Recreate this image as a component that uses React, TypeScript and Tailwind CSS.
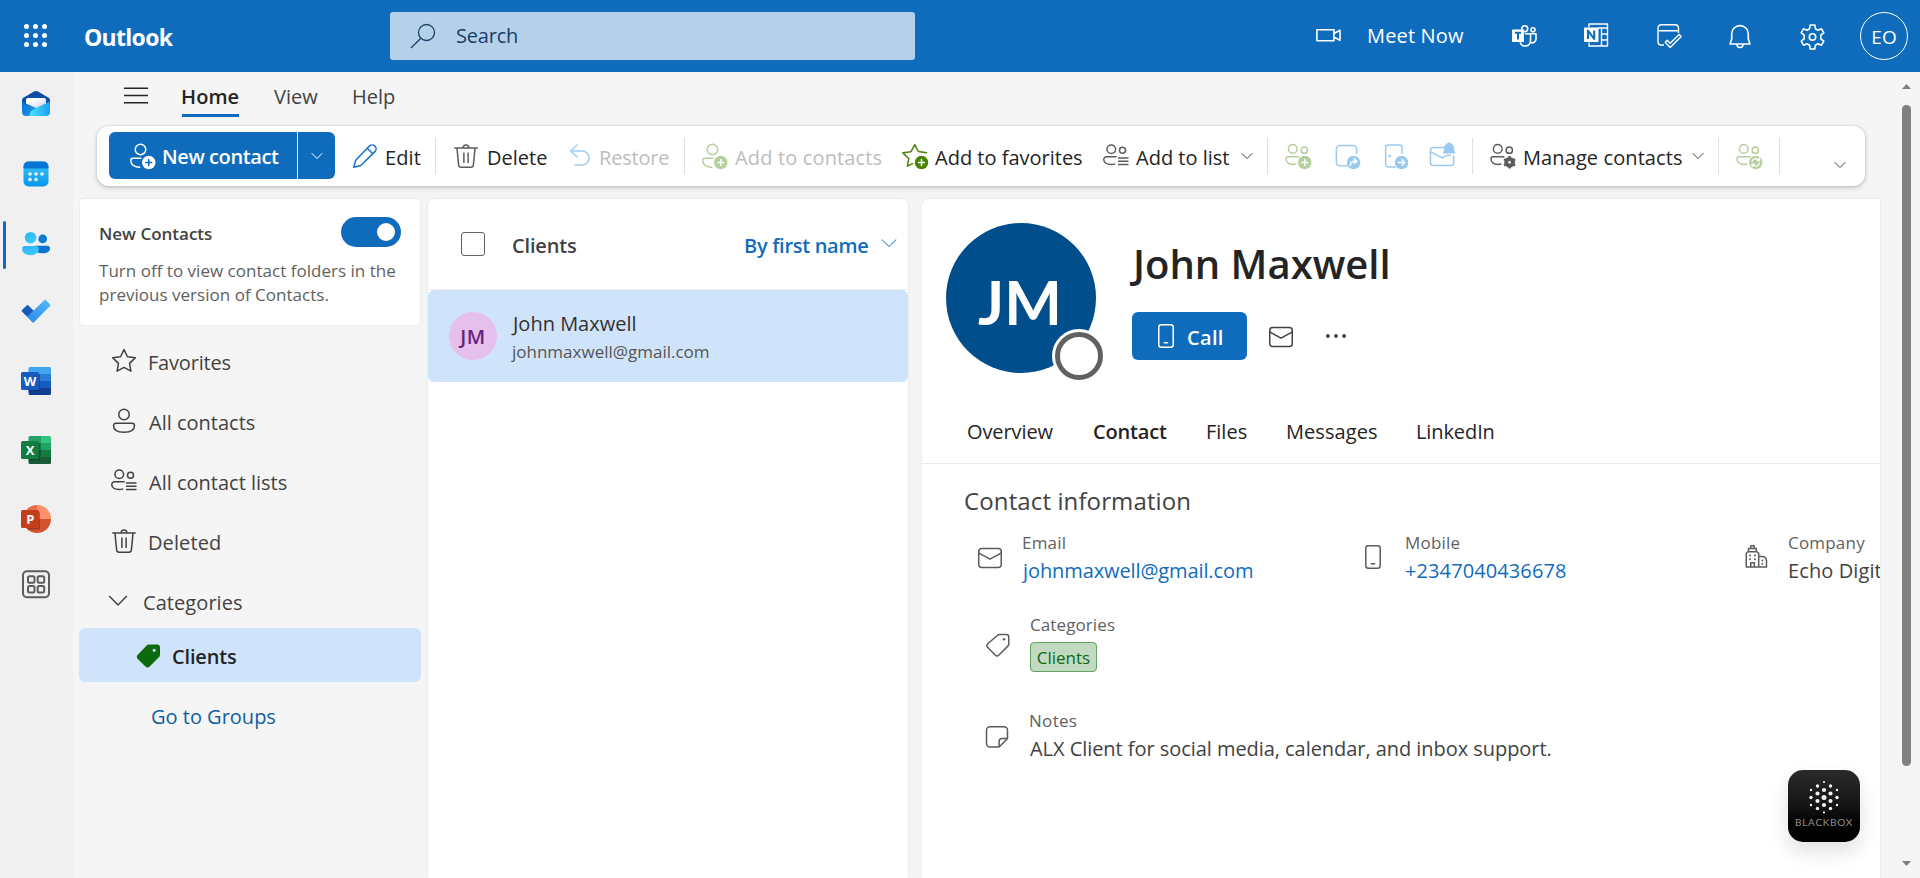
import type { ReactNode } from "react";

type IconProps = { className?: string; children: ReactNode };

/* 20-unit grid, drawn at 30px */
function Icon({ className = "", children }: IconProps) {
  return (
    <svg
      viewBox="0 0 20 20"
      fill="none"
      stroke="currentColor"
      strokeWidth="1"
      strokeLinecap="round"
      strokeLinejoin="round"
      className={`h-[30px] w-[30px] shrink-0 ${className}`}
    >
      {children}
    </svg>
  );
}

/* 28px grid, used in the top bar */
function BarIcon({ className = "", children }: IconProps) {
  return (
    <svg
      viewBox="0 0 28 28"
      fill="none"
      stroke="currentColor"
      strokeWidth="1.6"
      strokeLinejoin="round"
      className={`h-7 w-7 shrink-0 ${className}`}
    >
      {children}
    </svg>
  );
}

function Chevron({ className = "" }: { className?: string }) {
  return (
    <svg viewBox="0 0 12 12" fill="none" stroke="currentColor" strokeWidth="1" className={`h-3 w-3 shrink-0 ${className}`}>
      <path d="M.7 3.2 6 8.6l5.3-5.4" />
    </svg>
  );
}

const Plus = ({ cx = 14.5, cy = 14.3, mark = "#fff" }: { cx?: number; cy?: number; mark?: string }) => (
  <>
    <circle cx={cx} cy={cy} r="4.5" fill="currentColor" stroke="none" />
    <path d={`M${cx - 2} ${cy}h4M${cx} ${cy - 2}v4`} stroke={mark} />
  </>
);

function PersonAdd({ className, mark }: { className?: string; mark?: string }) {
  return (
    <Icon className={className}>
      <circle cx="9" cy="5.6" r="3.5" />
      <path d="M9.3 11.5H4A1.5 1.5 0 0 0 2.5 13c0 2.7 2.6 4.3 6 4.5" />
      <Plus mark={mark} />
    </Icon>
  );
}

function TwoPeople({ className, children }: { className?: string; children: ReactNode }) {
  return (
    <Icon className={className}>
      <circle cx="6.5" cy="5.3" r="2.9" />
      <circle cx="14.2" cy="6.1" r="2.1" />
      <path d="M10.6 10.5H3.4A1.4 1.4 0 0 0 2 11.9c0 2.3 1.9 3.7 4.5 3.7.8 0 1.5-.1 2.1-.3" />
      {children}
    </Icon>
  );
}

function PeopleList({ className }: { className?: string }) {
  return (
    <Icon className={className}>
      <circle cx="7.5" cy="5.5" r="2.9" />
      <circle cx="15" cy="6.2" r="2" />
      <path d="M10.8 10.5H4.4A1.9 1.9 0 0 0 2.5 12.4c0 2 2 3.3 4.9 3.3.9 0 1.7-.1 2.4-.3" />
      <path d="M12 11.3h7M12 13.5h7M12 15.7h7" strokeLinecap="butt" />
    </Icon>
  );
}

const Trash = ({ className }: { className?: string }) => (
  <Icon className={className}>
    <path d="M2.500 4.700h15M8.100 4.500a1.900 1.900 0 0 1 3.800 0M4 4.900l1.100 11.200a1.600 1.600 0 0 0 1.600 1.400h6.600a1.600 1.600 0 0 0 1.600-1.400L16 4.900M8.600 8v6.300M11.400 8v6.300" />
  </Icon>
);

const Envelope = ({ className }: { className?: string }) => (
  <Icon className={className}>
    <rect x="2.5" y="3.7" width="15" height="12.6" rx="2" />
    <path d="m2.7 6.7 7.3 4.1 7.3-4.1" />
  </Icon>
);

const Phone = ({ className }: { className?: string }) => (
  <Icon className={className}>
    <rect x="5.2" y="2.5" width="9.6" height="15" rx="1.7" />
    <path d="M8.9 14.5h2.2" />
  </Icon>
);

const Star = ({ className }: { className?: string }) => (
  <Icon className={className}>
    <path d="m10 2.4 2.3 4.8 5.2.7-3.8 3.7.9 5.2-4.6-2.5-4.6 2.5.9-5.2L2.5 7.9l5.2-.7z" />
  </Icon>
);

const Divider = ({ className = "" }: { className?: string }) => (
  <span className={`h-9 w-px shrink-0 bg-[#e0e0e0] ${className}`} />
);

const Label = ({ className = "", children }: { className?: string; children: ReactNode }) => (
  <span className={`mt-[3px] shrink-0 text-[20px] leading-7 ${className}`}>{children}</span>
);

function TopBar() {
  return (
    <header className="flex h-[72px] shrink-0 items-center bg-[#0f6cbd] text-white">
      <svg viewBox="0 0 24 24" fill="#fff" className="ml-6 h-6 w-6 shrink-0">
        {[2.5, 11.5, 20.5].map((y) =>
          [2.5, 11.5, 20.5].map((x) => <circle key={`${x}-${y}`} cx={x} cy={y} r="2.5" />)
        )}
      </svg>
      <span className="ml-[36px] mt-0.5 w-[100px] text-[23px] font-bold leading-8 tracking-[-0.7px]">Outlook</span>
      <div className="ml-[206px] flex h-12 w-[525px] items-center rounded-[3px] bg-[#b5d1ea] text-[#174066]">
        <svg viewBox="0 0 26 26" fill="none" stroke="currentColor" strokeWidth="1.3" className="ml-5 h-[26px] w-[26px]">
          <circle cx="16.5" cy="9.5" r="8" />
          <path d="M10.800 15.200 1 25" />
        </svg>
        <span className="ml-5 text-[20px] leading-7 tracking-[-0.2px]">Search</span>
      </div>
      <BarIcon className="ml-[400px]">
        <path d="M1.9 7.8h17v11h-17zM19 11.5l6-3.2v10l-6-3.2" />
      </BarIcon>
      <span className="ml-6 w-[99px] text-[20px] leading-7 tracking-[0.16px]">Meet Now</span>
      <BarIcon className="ml-[45px]">
        <circle cx="13.8" cy="6.7" r="2.9" />
        <circle cx="22" cy="7.7" r="2" />
        <path d="M14 11.8h5.500v6.800a5.300 5.300 0 0 1-10.400 1.600M19.500 11.800H25v5.500a3.700 3.700 0 0 1-5.200 3.200" />
        <rect x="1" y="7.5" width="12" height="12.5" rx=".6" fill="#fff" stroke="none" />
        <path d="M4 10.8h6M7 10.8v6.7" stroke="#0f6cbd" strokeWidth="2" />
      </BarIcon>
      <BarIcon className="ml-[43px]">
        <path d="M7 5V2h18.5v22H7v-3.500M16 6h9.500M19.500 6v18M19.500 12H25M19.500 18H25" strokeWidth="1.4" />
        <rect x="2" y="5.5" width="14.5" height="14.5" rx=".8" fill="#fff" stroke="none" />
        <path d="M6 17V8.500L12.200 17V8.500" stroke="#0f6cbd" strokeWidth="2.1" />
      </BarIcon>
      <BarIcon className="ml-[46px]">
        <path d="M22.500 11V6a3.200 3.200 0 0 0-3.200-3.200H5.200A3.200 3.200 0 0 0 2 6v13.800A3.200 3.200 0 0 0 5.200 23H8M2 8.700h20.500" strokeWidth="1.4" />
        <path d="m9.200 20.300 2-2 2.900 2.900 9-8.700 2.100 2-11 11.100z" strokeWidth="1.4" />
      </BarIcon>
      <BarIcon className="ml-[42px]">
        <path d="M14 3.600a8.300 8.300 0 0 0-8.300 8.300v5.300L4 22h20l-1.700-4.800v-5.300A8.300 8.300 0 0 0 14 3.600zM11 22.500a3 3 0 0 0 6 0" />
      </BarIcon>
      <BarIcon className="ml-[44px]">
        <path d="M11.600 6.700 12.200 3h4.600l.6 3.700 2.500 1.500 3.600-1.400 2.300 4-3 2.400v3.600l3 2.400-2.300 4-3.600-1.400-2.500 1.500-.6 3.700h-4.600l-.6-3.700-2.500-1.500-3.600 1.400-2.300-4 3-2.400v-3.600l-3-2.400 2.300-4 3.600 1.400z" />
        <circle cx="14.5" cy="15" r="3.2" />
      </BarIcon>
      <span className="ml-[34px] flex h-12 w-12 items-center justify-center rounded-full border border-white pt-0.5 text-[19px] leading-6">
        EO
      </span>
    </header>
  );
}

const RailIcon = ({ children }: { children: ReactNode }) => (
  <svg viewBox="0 0 32 32" className="h-8 w-8">
    {children}
  </svg>
);

const tileText = "fill-white font-['Open_Sans',sans-serif] text-[13px] font-bold";

function Rail() {
  const item = "relative flex h-12 w-full items-center justify-center pr-px";
  return (
    <aside className="flex w-[73px] shrink-0 flex-col gap-[21px] bg-[#f0f0f0] pt-[9px]">
      <div className={item}>
        <RailIcon>
          <defs>
            <linearGradient id="mailLeft" x1="0" x2="1" y1="0" y2="1">
              <stop offset="0" stopColor="#0a6fd0" />
              <stop offset="1" stopColor="#1fa0f2" />
            </linearGradient>
            <linearGradient id="mailRight" x1="0" x2="1">
              <stop offset="0" stopColor="#4be3fb" />
              <stop offset="1" stopColor="#199ff0" />
            </linearGradient>
            <linearGradient id="paper" x1="0" x2="1" y1="0" y2="1">
              <stop offset=".3" stopColor="#fff" />
              <stop offset="1" stopColor="#c9ccf0" />
            </linearGradient>
          </defs>
          <path d="M2 11.500c0-1.400.6-2.400 1.800-3.100L14 2.600a4 4 0 0 1 4 0l10.200 5.800c1.200.7 1.800 1.700 1.800 3.100V20H2z" fill="#0c4fa8" />
          <path d="M6 11a2 2 0 0 1 2-2h16a2 2 0 0 1 2 2v8H6z" fill="url(#paper)" />
          <path d="M2 12.500 20 21v6H6a4 4 0 0 1-4-4z" fill="url(#mailLeft)" />
          <path d="M30 12.500 14 20c-3 1.500-4.700 4-4.700 7H26a4 4 0 0 0 4-4z" fill="url(#mailRight)" />
        </RailIcon>
      </div>
      <div className={item}>
        <RailIcon>
          <defs>
            <linearGradient id="cal" x1="0" x2="0" y1="0" y2="1">
              <stop offset="0" stopColor="#42c8fb" />
              <stop offset="1" stopColor="#0795ee" />
            </linearGradient>
          </defs>
          <rect x="3.5" y="3.5" width="25" height="25" rx="5" fill="url(#cal)" />
          <path d="M3.500 10.500v-2a5 5 0 0 1 5-5h15a5 5 0 0 1 5 5v2z" fill="#0574d4" />
          <g fill="#fff">
            <circle cx="10" cy="16" r="1.7" />
            <circle cx="16" cy="16" r="1.7" />
            <circle cx="22" cy="16" r="1.7" />
            <circle cx="10" cy="21.5" r="1.7" />
            <circle cx="16" cy="21.5" r="1.7" />
          </g>
        </RailIcon>
      </div>
      <div className={item}>
        <span className="absolute left-[3px] top-0.5 h-12 w-[3px] rounded-full bg-[#0f6cbd]" />
        <RailIcon>
          <defs>
            <linearGradient id="person" x1="0" x2="1" y1="0" y2="1">
              <stop offset="0" stopColor="#2bb2f7" />
              <stop offset="1" stopColor="#3fd0ff" />
            </linearGradient>
          </defs>
          <circle cx="22.7" cy="11.9" r="4.3" fill="#0c7bd8" />
          <path d="M15 18.700h12.500a2.500 2.500 0 0 1 2.500 2.500c0 3.200-3 5-7 5s-8-1-8-3z" fill="#0873d2" />
          <circle cx="10.6" cy="10.7" r="5.8" fill="url(#person)" />
          <path d="M5 19h11a2.800 2.800 0 0 1 2.800 2.800c0 4.200-3.500 6.400-8.300 6.400S2.200 26 2.200 21.800A2.800 2.800 0 0 1 5 19z" fill="url(#person)" />
        </RailIcon>
      </div>
      <div className={item}>
        <RailIcon>
          <defs>
            <linearGradient id="check" x1="0" x2="1" y1="1" y2="0">
              <stop offset="0" stopColor="#2b88e8" />
              <stop offset="1" stopColor="#54bcf8" />
            </linearGradient>
          </defs>
          <path d="M1.900 14.200 6.600 9.500a1.300 1.300 0 0 1 1.800 0l7.300 7.300-6 6.400-7.800-7.800a.9.9 0 0 1 0-1.200z" fill="#195abd" />
          <path d="m7.300 20.600 17-16.300a1.200 1.200 0 0 1 1.700 0l4 4a1.200 1.200 0 0 1 0 1.700L14 26.200a1.300 1.300 0 0 1-1.800 0z" fill="url(#check)" />
        </RailIcon>
      </div>
      <div className={item}>
        <RailIcon>
          <path d="M10 2h19.500A1.500 1.500 0 0 1 31 3.500V9H8.500V3.500A1.500 1.500 0 0 1 10 2z" fill="#41a5ee" />
          <path d="M8.500 9H31v7H8.500z" fill="#2b7cd3" />
          <path d="M8.500 16H31v7H8.500z" fill="#185abd" />
          <path d="M8.500 23H31v5.500a1.500 1.500 0 0 1-1.500 1.500H10a1.500 1.500 0 0 1-1.500-1.500z" fill="#103f91" />
          <path d="M8.500 8.500h10a1.500 1.500 0 0 1 1.500 1.500v15a1.500 1.500 0 0 1-1.500 1.500h-10z" fill="#0b2d66" opacity=".45" />
          <rect x="1" y="7" width="18" height="18" rx="1.5" fill="#185abd" />
          <text x="10" y="20.7" textAnchor="middle" className={tileText}>W</text>
        </RailIcon>
      </div>
      <div className={item}>
        <RailIcon>
          <path d="M10 2h11v7H8.500V3.500A1.500 1.500 0 0 1 10 2z" fill="#21a366" />
          <path d="M21 2h8.500A1.500 1.500 0 0 1 31 3.500V9H21z" fill="#33c481" />
          <path d="M8.500 9H21v7H8.500z" fill="#107c41" />
          <path d="M21 9h10v7H21z" fill="#21a366" />
          <path d="M8.500 16H31v12.500a1.500 1.500 0 0 1-1.500 1.500H10a1.500 1.500 0 0 1-1.500-1.500z" fill="#185c37" />
          <path d="M21 16h10v7H21z" fill="#107c41" />
          <path d="M8.500 8.500h10a1.500 1.500 0 0 1 1.500 1.500v15a1.500 1.500 0 0 1-1.500 1.500h-10z" fill="#0b3a20" opacity=".5" />
          <rect x="1" y="7" width="18" height="18" rx="1.5" fill="#107c41" />
          <text x="10" y="20.7" textAnchor="middle" className={tileText}>X</text>
        </RailIcon>
      </div>
      <div className={item}>
        <RailIcon>
          <path d="M17 2a14 14 0 0 0-14 14h14z" fill="#ed6c47" />
          <path d="M17 2a14 14 0 0 1 14 14H17z" fill="#ff8f6b" />
          <path d="M3 16a14 14 0 0 0 28 0z" fill="#d35230" />
          <path d="M6 8.500h12.500A1.500 1.500 0 0 1 20 10v15a1.500 1.500 0 0 1-1.500 1.500H8A14 14 0 0 1 6 8.500z" fill="#6b1f0e" opacity=".5" />
          <rect x="1" y="7" width="18" height="18" rx="1.5" fill="#c43e1c" />
          <text x="10.3" y="20.7" textAnchor="middle" className={tileText}>P</text>
        </RailIcon>
      </div>
      <div className={`-mt-[3px] ${item}`}>
        <RailIcon>
          <g fill="none" stroke="#5c5c5c" strokeWidth="2">
            <rect x="3" y="2.3" width="26" height="26" rx="4" />
            <rect x="8" y="7.3" width="6.5" height="6.5" rx="1.5" />
            <rect x="17.7" y="7.3" width="6.5" height="6.5" rx="1.5" />
            <rect x="8" y="17" width="6.5" height="6.5" rx="1.5" />
            <rect x="17.7" y="17" width="6.5" height="6.5" rx="1.5" />
          </g>
        </RailIcon>
      </div>
    </aside>
  );
}

function MenuRow() {
  return (
    <nav className="flex h-[54px] shrink-0 pl-[51px] text-[20px] leading-7 text-[#424242]">
      <svg viewBox="0 0 24 18" stroke="#242424" strokeWidth="1.5" className="mt-[15px] h-[18px] w-6">
        <path d="M0 1.200h24M0 8.500h24M0 15.700h24" />
      </svg>
      <div className="ml-[34px] mt-[11px] h-[34px] w-[57px] border-b-[3px] border-[#0f6cbd] font-semibold text-[#242424]">
        <span className="-ml-px tracking-[0.1px]">Home</span>
      </div>
      <span className="ml-[35px] mt-[11px] w-[46px]">View</span>
      <span className="ml-[32px] mt-[11px]">Help</span>
    </nav>
  );
}

function Ribbon() {
  return (
    <div className="ml-6 flex h-[60px] w-[1768px] shrink-0 items-center rounded-xl bg-white pl-3 text-[#242424] shadow-[0_0_3px_rgba(0,0,0,0.14),0_2px_5px_rgba(0,0,0,0.18)]">
      <div className="-mt-px flex h-[47px] w-[226px] shrink-0 items-center overflow-hidden rounded-md bg-[#0f6cbd] text-white">
        <PersonAdd className="ml-[18px]" mark="#0f6cbd" />
        <Label className="ml-[5px] w-[135px] font-semibold tracking-[-0.4px]">New contact</Label>
        <span className="h-full w-px bg-white/90" />
        <Chevron className="ml-[13px]" />
      </div>
      <Icon className="ml-[15px] text-[#1373cc]">
        <path d="M12.900 3.400a2.300 2.300 0 0 1 3.700 3.700L7.200 16.300l-4.700 1.200 1.300-4.700zM11.500 4.800l3.700 3.700" />
      </Icon>
      <Label className="ml-[5px] w-[36px] tracking-[0.1px]">Edit</Label>
      <Divider className="ml-[14px]" />
      <Trash className="ml-[15px] text-[#5c5c5c]" />
      <Label className="ml-1.5 w-[60px]">Delete</Label>
      <Icon className="ml-[19px] text-[#9fcdf3]">
        <path d="M3.200 6.700h7.500a4.600 4.600 0 0 1 0 9.300H6M7.400 2.700l-4.300 4 4.300 4" />
      </Icon>
      <Label className="ml-[3px] w-[72px] tracking-[-0.2px] text-[#bdbdbd]">Restore</Label>
      <Divider className="ml-[13px]" />
      <PersonAdd className="ml-[14px] text-[#b5cf9d]" />
      <Label className="ml-1.5 w-[149px] tracking-[0.15px] text-[#bdbdbd]">Add to contacts</Label>
      <Icon className="ml-[15px] text-[#498205]">
        <path d="M18.300 7.800 12.900 7 10.500 2.400 8 7.100l-5.400.8 3.900 3.800-.9 5.100 3.500-1.700" />
        <Plus cx={15} />
      </Icon>
      <Label className="ml-1.5 w-[150px]">Add to favorites</Label>
      <PeopleList className="ml-[15px] text-[#5c5c5c]" />
      <Label className="ml-1.5 w-[97px]">Add to list</Label>
      <Chevron className="ml-2 text-[#424242]" />
      <Divider className="ml-[14px]" />
      <TwoPeople className="ml-[15px] text-[#b5cf9d]">
        <Plus />
      </TwoPeople>
      <Icon className="ml-[19px] text-[#9bc9f0]">
        <path d="M10 16.500H5.200A2.300 2.300 0 0 1 2.900 14.200V5.300A2.300 2.300 0 0 1 5.200 3h8.900a2.300 2.300 0 0 1 2.300 2.300v3" />
        <circle cx="14.4" cy="14.3" r="4.5" fill="currentColor" stroke="none" />
        <path d="M12.200 16.300c0-2 1.200-2.900 3.900-2.900M14.800 11.900l1.700 1.500-1.700 1.500" stroke="#fff" />
      </Icon>
      <Icon className="ml-[19px] text-[#9bc9f0]">
        <path d="M9.500 17.300H4.700a1.600 1.600 0 0 1-1.600-1.600V4.200a1.600 1.600 0 0 1 1.600-1.600h7.700A1.600 1.600 0 0 1 14 4.200v4" />
        <circle cx="5.900" cy="10" r=".9" fill="currentColor" stroke="none" />
        <circle cx="13.7" cy="14.3" r="4.5" fill="currentColor" stroke="none" />
        <path d="M11.500 14.300h4.200M14.100 12.600l1.700 1.700-1.700 1.700" stroke="#fff" />
      </Icon>
      <Icon className="ml-4 text-[#9bc9f0]">
        <path d="M11.200 4.300H4.300a2 2 0 0 0-2 2V14.300a2 2 0 0 0 2 2h11.500a2 2 0 0 0 2-2V10M2.500 7.200l7.500 4 2.800-1.500" />
        <path d="M14.700 1.400a3.100 3.100 0 0 0-3 3.100v1.700l-.9 1.800h7.900l-.9-1.800V4.500a3.100 3.100 0 0 0-3.100-3.100z" fill="currentColor" strokeWidth=".6" />
        <path d="M13.700 9.500h2" />
      </Icon>
      <Divider className="ml-[15px]" />
      <TwoPeople className="ml-[15px] text-[#5c5c5c]">
        <circle cx="14.4" cy="14.2" r="2.5" strokeWidth="2.2" />
        <path d="M14.400 10v8.400M10.700 12.100l7.400 4.200M18.100 12.100l-7.400 4.200" strokeWidth="1.5" strokeLinecap="butt" />
        <circle cx="14.4" cy="14.2" r=".9" fill="#fff" stroke="none" />
      </TwoPeople>
      <Label className="ml-[5px] w-[161px] tracking-[0.1px]">Manage contacts</Label>
      <Chevron className="ml-2 text-[#424242]" />
      <Divider className="ml-[14px]" />
      <TwoPeople className="ml-[15px] text-[#b5cf9d]">
        <circle cx="14.5" cy="14.3" r="4.5" fill="currentColor" stroke="none" />
        <path d="M12 13.700a2.600 2.600 0 0 1 4.600-.8M17 11.500v1.700h-1.700M17 14.900a2.600 2.600 0 0 1-4.600.8M12 17.100v-1.700h1.700" stroke="#fff" strokeWidth=".9" />
      </TwoPeople>
      <Divider className="ml-[15px]" />
      <Chevron className="ml-[54px] mt-[18px] text-[#424242]" />
    </div>
  );
}

function Folders() {
  const row = "flex h-[60px] items-center pl-[36px]";
  return (
    <section className="flex w-[355px] shrink-0 flex-col text-[#424242]">
      <div className="ml-[7px] h-[126px] w-[340px] shrink-0 rounded-sm bg-white pl-[20px] shadow-[0_0_2px_rgba(0,0,0,0.12)]">
        <div className="flex">
          <span className="-ml-px mt-[23px] w-[242px] text-[17px] font-semibold leading-6">New Contacts</span>
          <span className="mt-[18px] flex h-[30px] w-[60px] items-center justify-end rounded-full bg-[#0f6cbd] pr-1.5">
            <span className="h-[18px] w-[18px] rounded-full bg-white" />
          </span>
        </div>
        <p className="-ml-px mt-3 text-[17px] leading-6 tracking-[0.02px] text-[#616161]">
          Turn off to view contact folders in the
          <br />
          previous version of Contacts.
        </p>
      </div>
      <div className="mt-[6px] flex flex-col">
        <div className={row}>
          <Star />
          <Label className="ml-[9px] tracking-[-0.2px]">Favorites</Label>
        </div>
        <div className={row}>
          <Icon>
            <circle cx="10" cy="5.7" r="3.5" />
            <path d="M4.500 11.500h11a1.500 1.500 0 0 1 1.500 1.500c0 3-3 4.500-7 4.500S3 16 3 13a1.500 1.500 0 0 1 1.500-1.500z" />
          </Icon>
          <Label className="ml-[10px]">All contacts</Label>
        </div>
        <div className={row}>
          <PeopleList className="-ml-px" />
          <Label className="ml-[11px]">All contact lists</Label>
        </div>
        <div className={row}>
          <Trash />
          <Label className="ml-[9px] tracking-[0.1px]">Deleted</Label>
        </div>
        <div className="flex h-[57px] items-center pl-[35px] pt-[3px]">
          <svg viewBox="0 0 20 12" fill="none" stroke="currentColor" strokeWidth="1.5" className="h-3 w-5">
            <path d="m1.200 1 8.800 9L18.800 1" />
          </svg>
          <Label className="ml-[15px] tracking-[0.07px]">Categories</Label>
        </div>
      </div>
      <div className="ml-1.5 flex h-[54px] w-[342px] items-center rounded-md bg-[#cfe4fa] pl-[54px] text-[#242424]">
        <svg viewBox="0 0 20 20" className="h-[30px] w-[30px]">
          <path d="M10.500 3h5.500A2 2 0 0 1 18 5v5a2 2 0 0 1-.6 1.400l-6.300 6.300a2 2 0 0 1-2.800 0l-5.100-5.100a2 2 0 0 1 0-2.800l5.900-6.200A2 2 0 0 1 10.500 3z" fill="#0b6a0b" />
          <circle cx="14.1" cy="6.8" r="1" fill="#cfe4fa" />
        </svg>
        <Label className="ml-[9px] font-semibold tracking-[-0.16px]">Clients</Label>
      </div>
      <a className="ml-[78px] mt-[21px] text-[20px] leading-7 text-[#115ea3]">Go to Groups</a>
    </section>
  );
}

function ContactList() {
  return (
    <section className="flex w-[480px] shrink-0 flex-col rounded-t-md bg-white shadow-[0_0_2px_rgba(0,0,0,0.12)]">
      <div className="flex h-[91px] shrink-0 items-center border-b border-[#ebebeb] pl-[33px] font-semibold">
        <span className="h-6 w-6 rounded-[3px] border border-[#616161]" />
        <Label className="ml-[27px] w-[232px] tracking-[-0.16px] text-[#424242]">Clients</Label>
        <Label className="w-[129px] tracking-[-0.3px] text-[#0f6cbd]">By first name</Label>
        <svg viewBox="0 0 16 10" fill="none" stroke="#0f6cbd" strokeWidth="1" className="-mt-0.5 ml-2 h-2.5 w-4">
          <path d="m.8 1.500 7.200 7 7.200-7" />
        </svg>
      </div>
      <div className="flex h-[92px] shrink-0 rounded-md bg-[#cfe4fa] pl-[21px]">
        <span className="mt-[22px] flex h-12 w-12 items-center justify-center rounded-full bg-[#e6bfed] pt-0.5 text-[20px] font-semibold tracking-[0.5px] text-[#64237c]">
          JM
        </span>
        <div className="ml-3.5 flex flex-col pt-[22px]">
          <span className="ml-0.5 text-[20px] leading-6 text-[#323130]">John Maxwell</span>
          <span className="ml-px mt-1 text-[17px] leading-6 text-[#555]">johnmaxwell@gmail.com</span>
        </div>
      </div>
    </section>
  );
}

function Field({ icon, label, children }: { icon: ReactNode; label: string; children: ReactNode }) {
  return (
    <div className="flex w-[383px] shrink-0 items-center">
      <div className="-mt-0.5">{icon}</div>
      <div className="ml-[17px] flex flex-col whitespace-nowrap">
        <span className="text-[17px] leading-6 tracking-[0.2px] text-[#616161]">{label}</span>
        <span className="mt-0.5 text-[20px] leading-7">{children}</span>
      </div>
    </div>
  );
}

function Detail() {
  return (
    <section className="ml-3.5 flex w-[958px] shrink-0 flex-col overflow-hidden rounded-tl-md bg-white text-[#424242] shadow-[0_0_2px_rgba(0,0,0,0.12)]">
      <div className="flex h-[200px] shrink-0 pl-6 pt-6">
        <div className="relative h-[150px] w-[150px] shrink-0 rounded-full bg-[#004e8c]">
          <div className="flex h-full items-center justify-center pr-0.5 pt-[7px] font-['Lato','Open_Sans',sans-serif] text-[61px] font-bold text-white">
            JM
          </div>
          <span className="absolute left-[106px] top-[106px] h-[54px] w-[54px] rounded-full border-[3px] border-white bg-white">
            <span className="block h-12 w-12 rounded-full border-[5px] border-[#616161]" />
          </span>
        </div>
        <div className="ml-9 flex flex-col pt-[17px]">
          <h1 className="ml-px text-[40px] font-semibold leading-[48px] text-[#242424]">John Maxwell</h1>
          <div className="mt-6 flex items-center">
            <button className="flex h-12 w-[115px] items-center rounded-md bg-[#0f6cbd] pl-[19px] text-white">
              <Phone />
              <Label className="-mt-px ml-1.5 font-semibold tracking-[0.3px]">Call</Label>
            </button>
            <Envelope className="ml-[19px] mt-0.5 text-[#424242]" />
            <svg viewBox="0 0 20 4" fill="#424242" className="ml-[30px] h-1 w-5">
              <circle cx="1.9" cy="2" r="1.9" />
              <circle cx="10" cy="2" r="1.9" />
              <circle cx="18.1" cy="2" r="1.9" />
            </svg>
          </div>
        </div>
      </div>
      <div className="flex h-[65px] shrink-0 items-center border-b border-[#ebebeb] pl-[45px] pt-0.5 text-[20px] leading-7 text-[#242424]">
        <span className="w-[126px] tracking-[-0.1px]">Overview</span>
        <span className="w-[113px] font-semibold tracking-[-0.17px]">Contact</span>
        <span className="w-[80px]">Files</span>
        <span className="w-[130px] tracking-[0.07px]">Messages</span>
        <span className="tracking-[-0.1px]">LinkedIn</span>
      </div>
      <h2 className="ml-[42px] mt-[21px] text-[24px] leading-8 tracking-[0.12px]">Contact information</h2>
      <div className="mt-3.5 flex pl-[53px]">
        <Field icon={<Envelope className="mt-0.5 text-[#5c5c5c]" />} label="Email">
          <span className="ml-px tracking-[-0.1px] text-[#0f6cbd]">johnmaxwell@gmail.com</span>
        </Field>
        <Field icon={<Phone className="text-[#5c5c5c]" />} label="Mobile">
          <span className="tracking-[0.1px] text-[#0f6cbd]">+2347040436678</span>
        </Field>
        <Field
          icon={
            <Icon className="text-[#5c5c5c]">
              <path d="M3.500 16.700V7.500L4.500 6.500h6.200l1.100 1v9.200zM11.800 9.700h2.500a2.700 2.700 0 0 1 2.700 2.700v4.300h-5.200M5 6.300V4.400h5.200v1.900M6.500 4.200V2.500h2.200v1.700M6.500 16.500v-2.700h2.400v2.700" />
              <path d="M6 9h.1M9.200 9h.1M6 11.500h.1M9.200 11.500h.1M14.200 12.300h.1M14.200 14.500h.1" strokeWidth="1.2" />
            </Icon>
          }
          label="Company"
        >
          <span className="tracking-[0.1px]">Echo Digital</span>
        </Field>
      </div>
      <div className="mt-7 flex pl-[61px]">
        <Icon className="mt-[17px] text-[#5c5c5c]">
          <path d="M10.800 3h4.800A1.600 1.600 0 0 1 17.200 4.600v4.900a1.600 1.600 0 0 1-.5 1.100l-6.200 6.200a1.500 1.500 0 0 1-2.200 0L3 11.500a1.500 1.500 0 0 1 0-2.200l6.700-5.800A1.600 1.600 0 0 1 10.800 3z" />
          <circle cx="14" cy="6.2" r=".8" fill="currentColor" stroke="none" />
        </Icon>
        <div className="ml-[17px] flex flex-col">
          <span className="text-[17px] leading-6 tracking-[0.1px] text-[#616161]">Categories</span>
          <span className="mt-[5px] flex h-[30px] w-[67px] items-center justify-center rounded-[4px] border border-[#5fa35f] bg-[#c2dac2] pt-0.5 text-[17px] leading-6 text-[#0b6a0b]">
            Clients
          </span>
        </div>
      </div>
      <div className="mt-[37px] flex pl-[60px]">
        <Icon className="mt-[13px] text-[#5c5c5c]">
          <path d="M5.300 3.200h9.400a2.300 2.300 0 0 1 2.300 2.300V11l-5.600 5.700H5.300A2.300 2.300 0 0 1 3 14.400V5.500a2.300 2.300 0 0 1 2.300-2.300zM17 11h-3.600a2 2 0 0 0-2 2v3.700" />
        </Icon>
        <div className="ml-[17px] flex flex-col">
          <span className="text-[17px] leading-6 tracking-[0.3px] text-[#616161]">Notes</span>
          <span className="ml-px mt-0.5 text-[20px] leading-7 tracking-[-0.05px]">
            ALX Client for social media, calendar, and inbox support.
          </span>
        </div>
      </div>
    </section>
  );
}

const blackboxDots: [number, number, number][] = [
  [36, 12, 1.1], [36, 20, 2.1], [36, 27.5, 2.5], [36, 35, 2.1], [36, 42.5, 1.1],
  [29.5, 16, 1.7], [29.5, 23.5, 2.1], [29.5, 31, 2.1], [29.5, 38.5, 1.7],
  [42.5, 16, 1.7], [42.5, 23.5, 2.1], [42.5, 31, 2.1], [42.5, 38.5, 1.7],
  [23, 20, 1.2], [23, 27.5, 1.7], [23, 35, 1.2],
  [49, 20, 1.2], [49, 27.5, 1.7], [49, 35, 1.2],
];

function Blackbox() {
  return (
    <div className="absolute left-[1788px] top-[770px] flex h-[72px] w-[72px] flex-col overflow-hidden rounded-[15px] bg-linear-to-b from-[#2b2b2b] via-[#151515] to-black shadow-[0_10px_20px_rgba(0,0,0,0.12)]">
      <svg viewBox="0 0 72 46" className="h-[46px] w-full">
        {blackboxDots.map(([x, y, r]) => (
          <circle key={`${x}-${y}`} cx={x} cy={y} r={r} fill="#f2f2f2" />
        ))}
      </svg>
      <span className="text-center font-['Lato',sans-serif] text-[10px] leading-3 tracking-[0.7px] text-[#8f8f8f]">
        BLACKBOX
      </span>
    </div>
  );
}

function ScrollBar() {
  return (
    <div className="ml-auto flex w-[27px] flex-col items-center pt-3">
      <svg viewBox="0 0 9 5" fill="#7f7f7f" className="h-[5px] w-[9px]">
        <path d="M0 5 4.500 0 9 5z" />
      </svg>
      <span className="mt-4 h-[661px] w-[9px] rounded-full bg-[#808080]" />
      <svg viewBox="0 0 9 5" fill="#7f7f7f" className="mt-[95px] h-[5px] w-[9px]">
        <path d="M0 0 4.500 5 9 0z" />
      </svg>
    </div>
  );
}

export default function App() {
  return (
    <div className="relative flex h-[878px] w-[1920px] flex-col overflow-hidden whitespace-nowrap bg-[#f5f5f5] font-['Open_Sans','Noto_Sans',sans-serif]">
      <TopBar />
      <div className="flex min-h-0 flex-1">
        <Rail />
        <main className="flex w-[1808px] min-w-0 shrink-0 flex-col">
          <MenuRow />
          <Ribbon />
          <div className="mt-[13px] flex min-h-0 flex-1">
            <Folders />
            <ContactList />
            <Detail />
          </div>
        </main>
        <ScrollBar />
      </div>
      <Blackbox />
    </div>
  );
}
